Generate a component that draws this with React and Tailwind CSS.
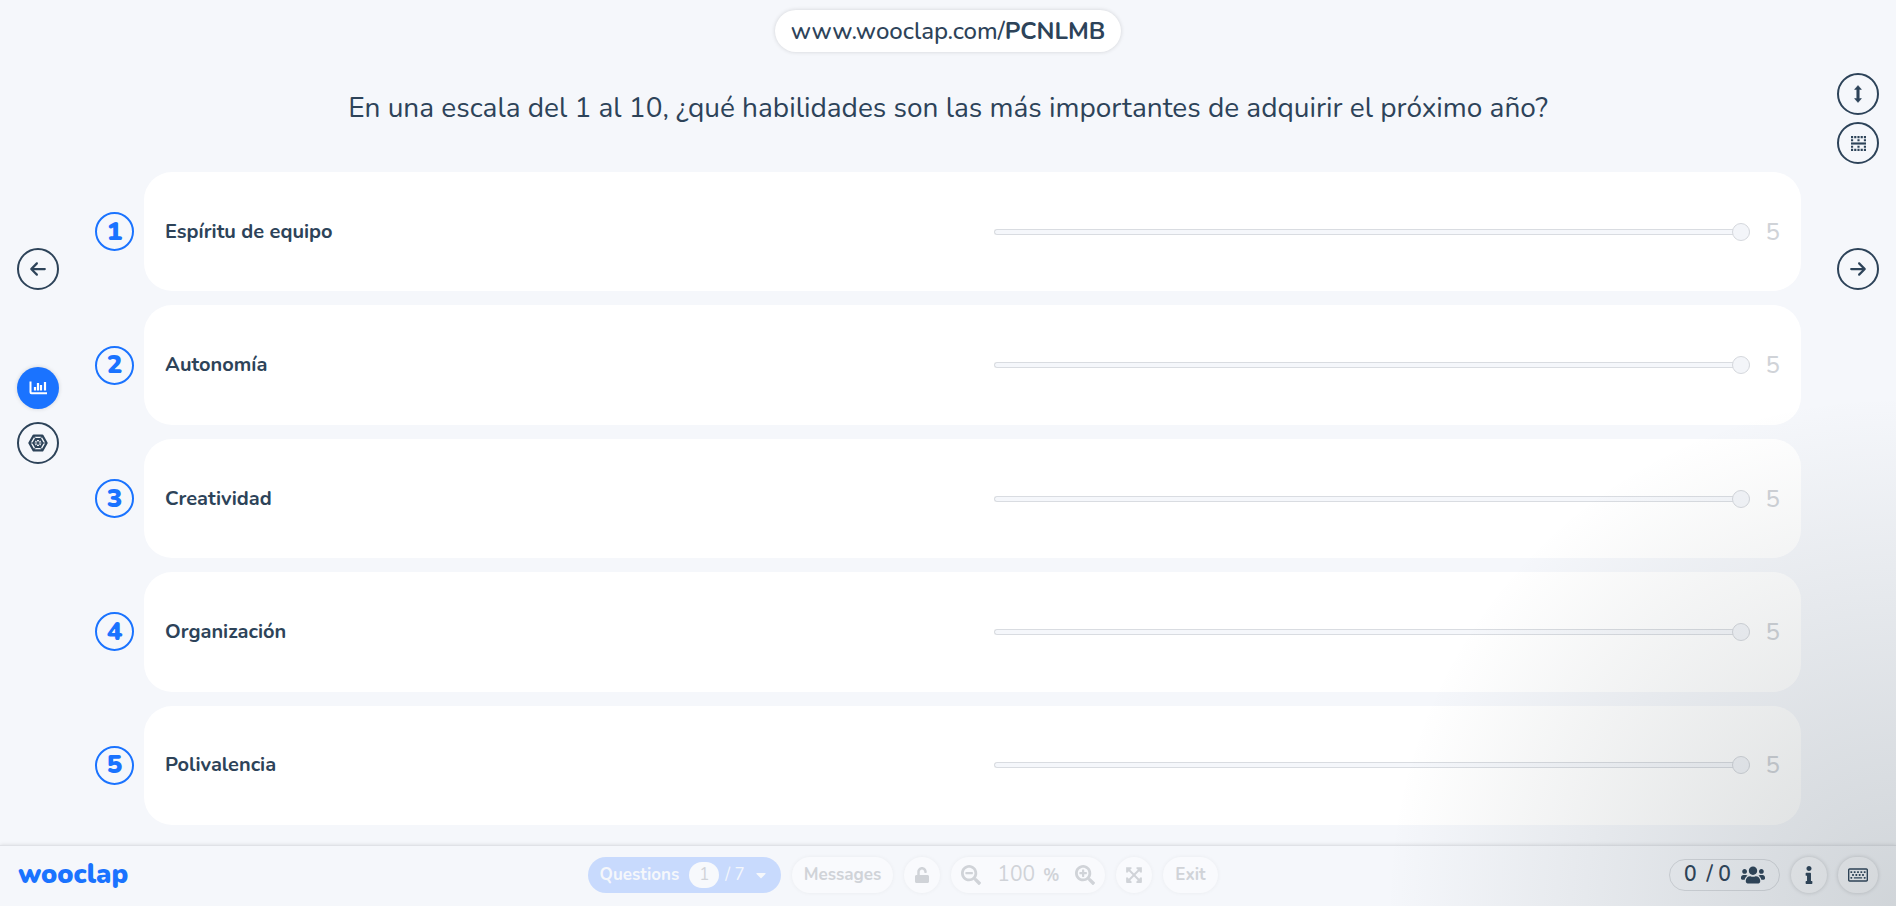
import {
  FaCaretDown,
  FaExpandArrowsAlt,
  FaInfo,
  FaRegKeyboard,
  FaSearchMinus,
  FaSearchPlus,
  FaUnlock,
  FaUsers,
} from "react-icons/fa";
import { FaArrowLeft, FaArrowRight } from "react-icons/fa6";

const skills = [
  { id: 1, label: "Espíritu de equipo", score: 5 },
  { id: 2, label: "Autonomía", score: 5 },
  { id: 3, label: "Creatividad", score: 5 },
  { id: 4, label: "Organización", score: 5 },
  { id: 5, label: "Polivalencia", score: 5 },
];

const BarsIcon = () => (
  <svg viewBox="0 0 18 14" className="h-3.5 w-[18px]" fill="none" stroke="currentColor" strokeWidth="2">
    <path d="M1.5 0.5v10.7a1 1 0 0 0 1 1H18" />
    <path d="M6 6v3.5M9 2v7.5M12 4v5.5M16 1v8.5" strokeWidth="2.2" />
  </svg>
);

const RadarIcon = () => (
  <svg viewBox="0 0 20 18" className="h-[18px] w-5" fill="none" stroke="currentColor" strokeLinejoin="round">
    <path d="M5.6 1.6h8.8L18.6 9l-4.2 7.4H5.6L1.4 9z" strokeWidth="2.2" />
    <path d="M7.6 5h4.8l2.3 4-2.3 4H7.6L5.3 9z" strokeWidth="1.8" />
    <path d="M1.2 9h17.6M5.6 1.4l8.8 15.2M14.4 1.4 5.6 16.6" strokeWidth="1" />
  </svg>
);

const ResizeIcon = () => (
  <svg viewBox="0 0 10 18" className="h-[18px] w-2.5" fill="currentColor">
    <path d="M5 0.6 8.4 4.4H6.2v9.2h2.2L5 17.4 1.6 13.6h2.2V4.4H1.6z" stroke="currentColor" strokeWidth="0.6" strokeLinejoin="round" />
  </svg>
);

const SplitIcon = () => (
  <svg viewBox="0 0 14 14" className="size-[15px]" fill="none" stroke="currentColor" strokeWidth="2">
    <path d="M0 1h14M0 13h14" strokeDasharray="2 1" />
    <path d="M0 4h14M0 10h14" strokeDasharray="2 4" />
    <path d="M0 7h14" />
  </svg>
);

const RoundButton = ({ label, active, children }) => (
  <button
    type="button"
    aria-label={label}
    className={
      active
        ? "flex size-[42px] items-center justify-center rounded-full bg-[#1a73ff] text-white shadow-[0_0_4px_rgba(0,0,0,0.15)]"
        : "flex size-[42px] items-center justify-center rounded-full border-2 border-[#2d4359] text-[#2d4359]"
    }
  >
    {children}
  </button>
);

const SkillRow = ({ skill }) => (
  <li className="flex flex-1 items-center gap-2.5">
    <span className="flex size-[39px] shrink-0 items-center justify-center rounded-full border-2 border-[#1a73ff] text-[26px] leading-8 font-black text-[#1a73ff]">
      {skill.id}
    </span>
    <div className="flex flex-1 items-center self-stretch rounded-[28px] bg-white">
      <label htmlFor={`skill-${skill.id}`} className="w-1/2 px-[21px] text-xl font-bold">
        {skill.label}
      </label>
      <div className="flex w-1/2 items-center gap-4 px-[21px]">
        <input
          id={`skill-${skill.id}`}
          type="range"
          min="0"
          max="5"
          defaultValue={skill.score}
          className="h-[18px] min-w-0 flex-1 appearance-none bg-transparent [&::-webkit-slider-runnable-track]:h-1.5 [&::-webkit-slider-runnable-track]:rounded-full [&::-webkit-slider-runnable-track]:border-y [&::-webkit-slider-runnable-track]:border-l [&::-webkit-slider-runnable-track]:border-[#d9dce1] [&::-webkit-slider-runnable-track]:bg-[#f5f7fb] [&::-webkit-slider-thumb]:-mt-[7px] [&::-webkit-slider-thumb]:size-[18px] [&::-webkit-slider-thumb]:appearance-none [&::-webkit-slider-thumb]:rounded-full [&::-webkit-slider-thumb]:border [&::-webkit-slider-thumb]:border-[#d5d8dd] [&::-webkit-slider-thumb]:bg-[#f3f5f9]"
        />
        <span className="text-2xl leading-6 font-medium text-[#d0d3d8]">{skill.score}</span>
      </div>
    </div>
  </li>
);

const softPill = "flex h-9 items-center rounded-full bg-[#f9fafd] shadow-[0_0_4px_rgba(0,0,0,0.05)]";

const Footer = () => (
  <footer className="flex h-[61px] items-center justify-between border-t border-[#e0e2e7] px-[18px] pb-0.5 shadow-[0_0_4px_rgba(0,0,0,0.12)]">
    <a href="/" className="pr-2 text-[27px] leading-8 font-black text-[#1a73ff]">
      wooclap
    </a>

    {/* Presenter controls */}
    <div className="flex items-center gap-[11px] text-[#d0d3d8]">
      <button type="button" className="flex h-9 items-center rounded-full bg-[#c8dafd] px-3 text-[17px] font-bold text-[#f5f7fb]">
        Questions
        <span className="mr-1.5 ml-2.5 flex h-[26px] w-[30px] items-center justify-center rounded-full bg-[#f7f9fc] font-normal text-[#d0d3d8]">1</span>
        <span className="font-normal">/ 7</span>
        <FaCaretDown className="ml-2 size-4" />
      </button>
      <button type="button" className={`${softPill} px-3 text-[17px] font-bold`}>Messages</button>
      <button type="button" aria-label="Lock" className={`${softPill} w-9 justify-center`}>
        <FaUnlock className="size-4" />
      </button>
      <div className={`${softPill} gap-4 px-2.5`}>
        <button type="button" aria-label="Zoom out"><FaSearchMinus className="size-5" /></button>
        <span className="flex items-baseline gap-2 text-[21px]">
          100 <span className="text-[17px] font-bold">%</span>
        </span>
        <button type="button" aria-label="Zoom in"><FaSearchPlus className="size-5" /></button>
      </div>
      <button type="button" aria-label="Full screen" className={`${softPill} w-9 justify-center`}>
        <FaExpandArrowsAlt className="size-[18px]" />
      </button>
      <button type="button" className={`${softPill} px-3 text-[17px] font-bold`}>Exit</button>
    </div>

    <div className="flex items-center gap-[11px]">
      <div className="flex h-8 items-center gap-2.5 rounded-full border border-[#d8dbe0] px-3.5 text-[21px] font-semibold">
        <span className="flex gap-2.5">
          <span>0</span>
          <span>/ 0</span>
        </span>
        <FaUsers className="size-6" />
      </div>
      <button type="button" aria-label="Information" className="flex size-9 items-center justify-center rounded-full bg-[#f9fafd] shadow-[0_0_4px_rgba(0,0,0,0.18)]">
        <FaInfo className="size-[18px]" />
      </button>
      <button type="button" aria-label="Keyboard shortcuts" className="flex h-9 w-10 items-center justify-center rounded-full bg-[#f9fafd] shadow-[0_0_4px_rgba(0,0,0,0.18)]">
        <FaRegKeyboard className="size-5" />
      </button>
    </div>
  </footer>
);

const App = () => {
  return (
    <div className="relative flex min-h-screen flex-col bg-[#f5f7fb] font-['Nunito','Lato',sans-serif] text-[#2d4359]">
      <div className="flex flex-1">
        <aside className="flex w-[95px] flex-col items-start pt-[248px] pl-[17px]">
          <RoundButton label="Previous question">
            <FaArrowLeft className="size-[18px]" />
          </RoundButton>
          <div className="mt-[77px] flex flex-col gap-[13px]">
            <RoundButton label="Bar chart" active>
              <BarsIcon />
            </RoundButton>
            <RoundButton label="Radar chart">
              <RadarIcon />
            </RoundButton>
          </div>
        </aside>

        <main className="flex flex-1 flex-col pt-2.5 pb-5">
          <a href="/PCNLMB" className="flex h-[42px] items-center self-center rounded-full bg-white px-4 text-2xl shadow-[0_0_4px_rgba(0,0,0,0.15)]">
            <span className="font-medium">www.wooclap.com/</span>
            <span className="font-bold">PCNLMB</span>
          </a>
          <h1 className="mt-9 mb-11 text-center text-[28px] leading-10">
            En una escala del 1 al 10, ¿qué habilidades son las más importantes de adquirir el próximo año?
          </h1>
          <ol className="flex flex-1 flex-col gap-3.5">
            {skills.map((skill) => (
              <SkillRow key={skill.id} skill={skill} />
            ))}
          </ol>
        </main>

        <aside className="flex w-[95px] flex-col items-end pt-[73px] pr-[17px]">
          <div className="flex flex-col gap-[7px]">
            <RoundButton label="Resize">
              <ResizeIcon />
            </RoundButton>
            <RoundButton label="Split view">
              <SplitIcon />
            </RoundButton>
          </div>
          <div className="mt-[84px]">
            <RoundButton label="Next question">
              <FaArrowRight className="size-[18px]" />
            </RoundButton>
          </div>
        </aside>
      </div>

      <Footer />

      {/* Corner shade */}
      <div className="pointer-events-none absolute right-0 bottom-0 size-[520px] bg-[radial-gradient(circle_at_bottom_right,rgba(50,65,70,0.19),rgba(50,65,70,0.13)_170px,rgba(50,65,70,0.055)_370px,rgba(50,65,70,0)_510px)]" />
    </div>
  );
};

export default App;
